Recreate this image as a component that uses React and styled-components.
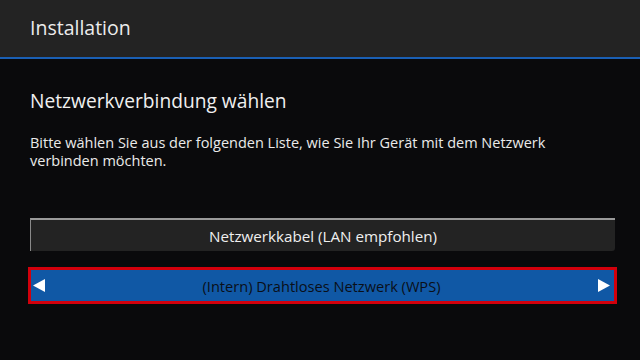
import React from 'react';
import styled, { createGlobalStyle } from 'styled-components';

const GlobalStyle = createGlobalStyle`
  html, body {
    margin: 0;
    padding: 0;
    background: #0a0a0c;
  }
  body {
    font-family: 'Open Sans', 'Noto Sans', sans-serif;
  }
`;

const Screen = styled.div`
  width: 640px;
  height: 360px;
  background: #0a0a0c;
  display: flex;
  flex-direction: column;
  overflow: hidden;
`;

const Header = styled.header`
  height: 59px;
  background: #232323;
  border-bottom: 2px solid #1a5fb4;
  display: flex;
  align-items: center;
  padding: 0 30px;
  box-sizing: border-box;
  flex-shrink: 0;
`;

const HeaderTitle = styled.h1`
  margin: 0;
  font-size: 19.5px;
  font-weight: 400;
  color: #ececec;
  margin-top: -2px;
`;

const Content = styled.main`
  padding: 29px 30px 0;
  display: flex;
  flex-direction: column;
`;

const Title = styled.h2`
  margin: 0;
  font-size: 19.2px;
  font-weight: 400;
  color: #f0f0f0;
  line-height: 26px;
`;

const Description = styled.p`
  margin: 20px 0 0;
  font-size: 14.5px;
  line-height: 18px;
  color: #eaeaea;
  width: 540px;
`;

const Options = styled.div`
  margin-top: 48px;
  display: flex;
  flex-direction: column;
  gap: 16px;
`;

const OptionButton = styled.div`
  width: 585px;
  height: 33px;
  box-sizing: border-box;
  display: flex;
  align-items: center;
  justify-content: center;
  font-size: 15.2px;
  background: #232323;
  color: #efefef;
  border-top: 2px solid #9a9a9a;
  border-left: 1px solid #8a8a8a;
  border-bottom-right-radius: 3px;
`;

const SelectedButton = styled.div`
  width: 589px;
  height: 37px;
  margin-left: -2px;
  box-sizing: border-box;
  display: flex;
  align-items: center;
  justify-content: space-between;
  padding: 0 4px 0 2px;
  background: #1058a5;
  border: 3px solid #d2000c;
  color: #0a0f18;
  font-size: 14.6px;
`;

const Label = styled.span`
  flex: 1;
  text-align: center;
`;

const Arrow = ({ dir }) => (
  <svg width="12" height="13" viewBox="0 0 12 13">
    {dir === 'left' ? (
      <polygon points="12,0 12,13 0,6.5" fill="#ffffff" />
    ) : (
      <polygon points="0,0 0,13 12,6.5" fill="#ffffff" />
    )}
  </svg>
);

export default function App() {
  return (
    <Screen>
      <GlobalStyle />
      <Header>
        <HeaderTitle>Installation</HeaderTitle>
      </Header>
      <Content>
        <Title>Netzwerkverbindung wählen</Title>
        <Description>
          Bitte wählen Sie aus der folgenden Liste, wie Sie Ihr Gerät mit dem Netzwerk verbinden möchten.
        </Description>
        <Options>
          <OptionButton>Netzwerkkabel (LAN empfohlen)</OptionButton>
          <SelectedButton>
            <Arrow dir="left" />
            <Label>(Intern) Drahtloses Netzwerk (WPS)</Label>
            <Arrow dir="right" />
          </SelectedButton>
        </Options>
      </Content>
    </Screen>
  );
}
